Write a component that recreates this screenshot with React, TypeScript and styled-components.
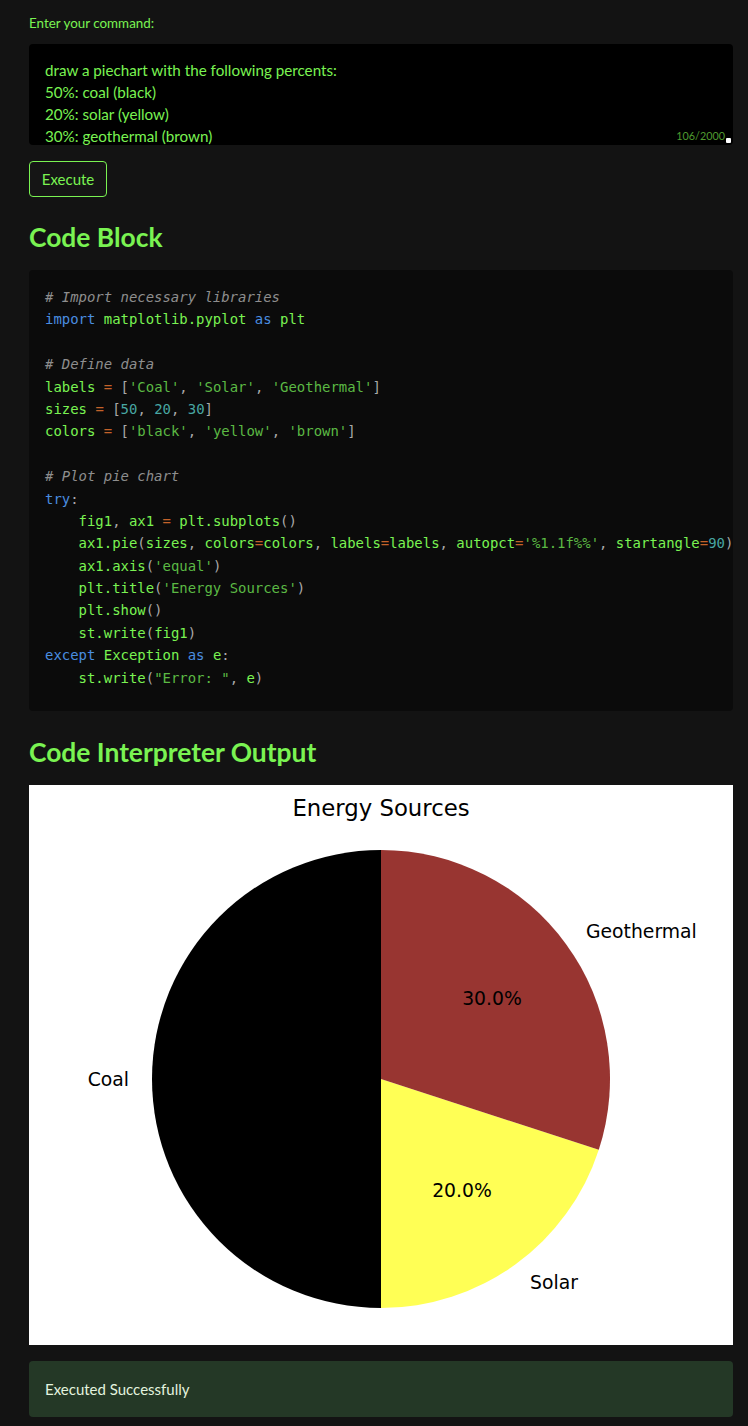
import React from "react";
import styled, { createGlobalStyle } from "styled-components";

const GREEN = "#7af352";

const Global = createGlobalStyle`
  html, body { margin: 0; padding: 0; background: #131313; }
  body { font-family: Lato, "Noto Sans", sans-serif; }
`;

const Page = styled.div`
  display: flex;
  flex-direction: column;
  padding: 14px 15px 0 29px;
  min-height: 1426px;
  box-sizing: border-box;
`;

const Label = styled.div`
  color: ${GREEN};
  font-size: 13.4px;
  line-height: 18px;
  margin-bottom: 12px;
`;

const InputBox = styled.div`
  position: relative;
  height: 101px;
  box-sizing: border-box;
  background: #000;
  border-radius: 4px;
  padding: 15px 16px 0 16px;
  overflow: hidden;
  color: ${GREEN};
  font-size: 15.2px;
  line-height: 22px;
  white-space: pre-wrap;
`;

const Counter = styled.span`
  position: absolute;
  right: 8px;
  bottom: 2px;
  font-size: 10.8px;
  color: #4f9b2f;
  line-height: 14px;
`;

const Handle = styled.span`
  position: absolute;
  right: 2px;
  bottom: 2px;
  width: 5px;
  height: 5px;
  background: #fff;
  border-radius: 1px;
`;

const Button = styled.button`
  align-self: flex-start;
  margin-top: 16px;
  height: 36px;
  width: 78px;
  background: #151515;
  border: 1px solid ${GREEN};
  border-radius: 4px;
  color: ${GREEN};
  font-family: Lato, "Noto Sans", sans-serif;
  font-size: 15px;
  padding: 0;
`;

const Heading = styled.h2<{ $top: number }>`
  margin: ${(p) => p.$top}px 0 16px 0;
  color: ${GREEN};
  font-size: 26.4px;
  font-weight: 700;
  line-height: 34px;
`;

const CodeBox = styled.pre`
  margin: 0;
  background: #0b0b0b;
  border-radius: 4px;
  padding: 16px 0 22px 16px;
  overflow: hidden;
  font-family: "DejaVu Sans Mono", "Liberation Mono", monospace;
  font-size: 13.95px;
  line-height: 22.4px;
  white-space: pre;
`;

const Line = styled.div`
  height: 22.4px;
`;

type Kind = "c" | "k" | "n" | "o" | "s" | "m" | "p";

const colorOf: Record<Kind, string> = {
  c: "#8e8e8e",
  k: "#4a8ee0",
  n: "#7af352",
  o: "#c4622a",
  s: "#5bb944",
  m: "#48a7a3",
  p: "#a9a9a9",
};

const Tok = styled.span<{ $k: Kind }>`
  color: ${(p) => colorOf[p.$k]};
  font-style: ${(p) => (p.$k === "c" ? "italic" : "normal")};
`;

const code: [Kind, string][][] = [
  [["c", "# Import necessary libraries"]],
  [["k", "import"], ["p", " "], ["n", "matplotlib.pyplot"], ["p", " "], ["k", "as"], ["p", " "], ["n", "plt"]],
  [],
  [["c", "# Define data"]],
  [["n", "labels"], ["p", " "], ["o", "="], ["p", " ["], ["s", "'Coal'"], ["p", ", "], ["s", "'Solar'"], ["p", ", "], ["s", "'Geothermal'"], ["p", "]"]],
  [["n", "sizes"], ["p", " "], ["o", "="], ["p", " ["], ["m", "50"], ["p", ", "], ["m", "20"], ["p", ", "], ["m", "30"], ["p", "]"]],
  [["n", "colors"], ["p", " "], ["o", "="], ["p", " ["], ["s", "'black'"], ["p", ", "], ["s", "'yellow'"], ["p", ", "], ["s", "'brown'"], ["p", "]"]],
  [],
  [["c", "# Plot pie chart"]],
  [["k", "try"], ["p", ":"]],
  [["p", "    "], ["n", "fig1"], ["p", ", "], ["n", "ax1"], ["p", " "], ["o", "="], ["p", " "], ["n", "plt.subplots"], ["p", "()"]],
  [
    ["p", "    "], ["n", "ax1.pie"], ["p", "("], ["n", "sizes"], ["p", ", "], ["n", "colors"], ["o", "="], ["n", "colors"],
    ["p", ", "], ["n", "labels"], ["o", "="], ["n", "labels"], ["p", ", "], ["n", "autopct"], ["o", "="],
    ["s", "'%1.1f%%'"], ["p", ", "], ["n", "startangle"], ["o", "="], ["m", "90"], ["p", ")"],
  ],
  [["p", "    "], ["n", "ax1.axis"], ["p", "("], ["s", "'equal'"], ["p", ")"]],
  [["p", "    "], ["n", "plt.title"], ["p", "("], ["s", "'Energy Sources'"], ["p", ")"]],
  [["p", "    "], ["n", "plt.show"], ["p", "()"]],
  [["p", "    "], ["n", "st.write"], ["p", "("], ["n", "fig1"], ["p", ")"]],
  [["k", "except"], ["p", " "], ["n", "Exception"], ["p", " "], ["k", "as"], ["p", " "], ["n", "e"], ["p", ":"]],
  [["p", "    "], ["n", "st.write"], ["p", "("], ["s", "\"Error: \""], ["p", ", "], ["n", "e"], ["p", ")"]],
];

const ChartBox = styled.div`
  background: #fff;
  height: 560px;
  display: flex;
`;

const ChartText = styled.text`
  font-family: "DejaVu Sans", sans-serif;
  fill: #000;
`;

const Success = styled.div`
  margin-top: 16px;
  height: 56px;
  box-sizing: border-box;
  background: #243826;
  border-radius: 4px;
  display: flex;
  align-items: center;
  padding: 0 16px;
  color: #e3f3df;
  font-size: 15px;
`;

function PieChart() {
  const cx = 352;
  const cy = 294;
  const r = 229;
  const pt = (deg: number, rr: number) => {
    const a = (deg * Math.PI) / 180;
    return [cx + rr * Math.cos(a), cy - rr * Math.sin(a)];
  };
  const [sx, sy] = pt(342, r);
  const lf = 18.8;
  return (
    <svg width="704" height="560" viewBox="0 0 704 560">
      <ChartText x={cx} y={31} textAnchor="middle" fontSize={22.8}>Energy Sources</ChartText>
      <path d={`M${cx},${cy} L${cx},${cy - r} A${r},${r} 0 0 0 ${cx},${cy + r} Z`} fill="#000" />
      <path d={`M${cx},${cy} L${cx},${cy + r} A${r},${r} 0 0 0 ${sx},${sy} Z`} fill="#ffff55" />
      <path d={`M${cx},${cy} L${sx},${sy} A${r},${r} 0 0 0 ${cx},${cy - r} Z`} fill="#983531" />
      <ChartText x={100} y={294} textAnchor="end" dominantBaseline="central" fontSize={lf}>Coal</ChartText>
      <ChartText x={557} y={146} textAnchor="start" dominantBaseline="central" fontSize={lf}>Geothermal</ChartText>
      <ChartText x={501} y={497} textAnchor="start" dominantBaseline="central" fontSize={lf}>Solar</ChartText>
      <ChartText x={463} y={213} textAnchor="middle" dominantBaseline="central" fontSize={lf}>30.0%</ChartText>
      <ChartText x={433} y={405} textAnchor="middle" dominantBaseline="central" fontSize={lf}>20.0%</ChartText>
    </svg>
  );
}

export default function App() {
  return (
    <>
      <Global />
      <Page>
        <Label>Enter your command:</Label>
        <InputBox>
          {"draw a piechart with the following percents:\n50%: coal (black)\n20%: solar (yellow)\n30%: geothermal (brown)"}
          <Counter>106/2000</Counter>
          <Handle />
        </InputBox>
        <Button>Execute</Button>
        <Heading $top={23}>Code Block</Heading>
        <CodeBox>
          {code.map((line, i) => (
            <Line key={i}>
              {line.map(([k, t], j) => (
                <Tok key={j} $k={k}>{t}</Tok>
              ))}
            </Line>
          ))}
        </CodeBox>
        <Heading $top={24}>Code Interpreter Output</Heading>
        <ChartBox>
          <PieChart />
        </ChartBox>
        <Success>Executed Successfully</Success>
      </Page>
    </>
  );
}
